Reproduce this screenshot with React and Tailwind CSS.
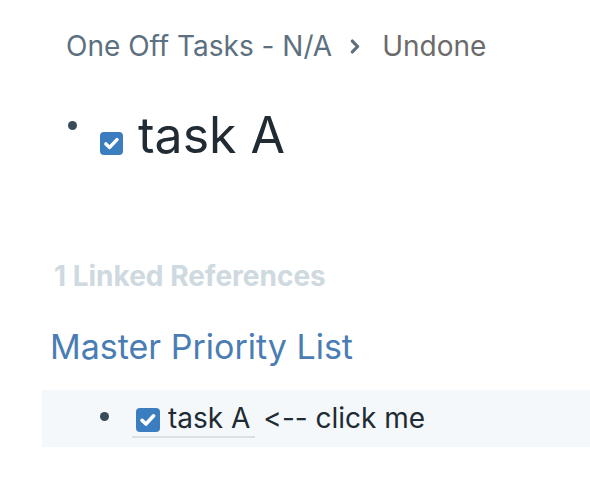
import React from 'react';

function Check({ size }) {
  return (
    <span
      className={`inline-flex shrink-0 items-center justify-center rounded-[4px] bg-[#3a7ebf] ${size}`}
    >
      <svg viewBox="0 0 16 16" className="h-[82%] w-[82%]" fill="none">
        <path d="M3.3 8.4 L6.5 11.4 L12.7 4.7" stroke="white" strokeWidth="2.9" strokeLinecap="round" strokeLinejoin="round" />
      </svg>
    </span>
  );
}

export default function App() {
  return (
    <div className="min-h-[480px] w-[590px] overflow-hidden bg-white font-['Inter',sans-serif] [font-feature-settings:'calt'_0]">
      {/* Breadcrumb */}
      <div className="flex items-center pl-[66px] pt-[28px] text-[28px] leading-[36px]">
        <span className="text-[#5c7080]">One Off Tasks - N/A</span>
        <svg viewBox="0 0 10 16" className="ml-[18px] mr-[22px] h-[15px] w-[10px]" fill="none">
          <path d="M2.2 2.2 L7.8 8 L2.2 13.8" stroke="#5c7080" strokeWidth="3.4" strokeLinecap="round" strokeLinejoin="round" />
        </svg>
        <span className="text-[#6b6b6b]">Undone</span>
      </div>

      {/* Title block */}
      <div className="mt-[41px] flex items-start pl-[68px]">
        <span className="mt-[16px] h-[9px] w-[9px] shrink-0 rounded-full bg-[#394b59]" />
        <Check size="ml-[23px] mt-[27px] h-[23px] w-[23px]" />
        <span className="ml-[15px] text-[50px] leading-[60px] text-[#202b33]">task A</span>
      </div>

      {/* Linked references */}
      <div className="mt-[93px] pl-[54px] text-[28px] font-bold leading-[36px] text-[#ced9e0]">
        1 Linked References
      </div>

      <div className="mt-[31px] pl-[50px] text-[34px] leading-[44px] text-[#4a7db3]">
        Master Priority List
      </div>

      <div className="mt-[21px] ml-[42px] flex h-[57px] items-start bg-[#f5f8fa] pl-[58px] pt-[13px]">
        <span className="mt-[9px] h-[9px] w-[9px] shrink-0 rounded-full bg-[#394b59]" />
        <div className="ml-[23px] flex items-start border-b-[2px] border-[#d8e1e8] pb-[3px] pl-[4px] pr-[5px]">
          <Check size="mt-[5px] h-[24px] w-[24px]" />
          <span className="ml-[8px] text-[28px] leading-[30px] text-[#202b33]">task A</span>
        </div>
        <span className="ml-[8px] text-[28px] leading-[30px] text-[#202b33]">&lt;-- click me</span>
      </div>
    </div>
  );
}
